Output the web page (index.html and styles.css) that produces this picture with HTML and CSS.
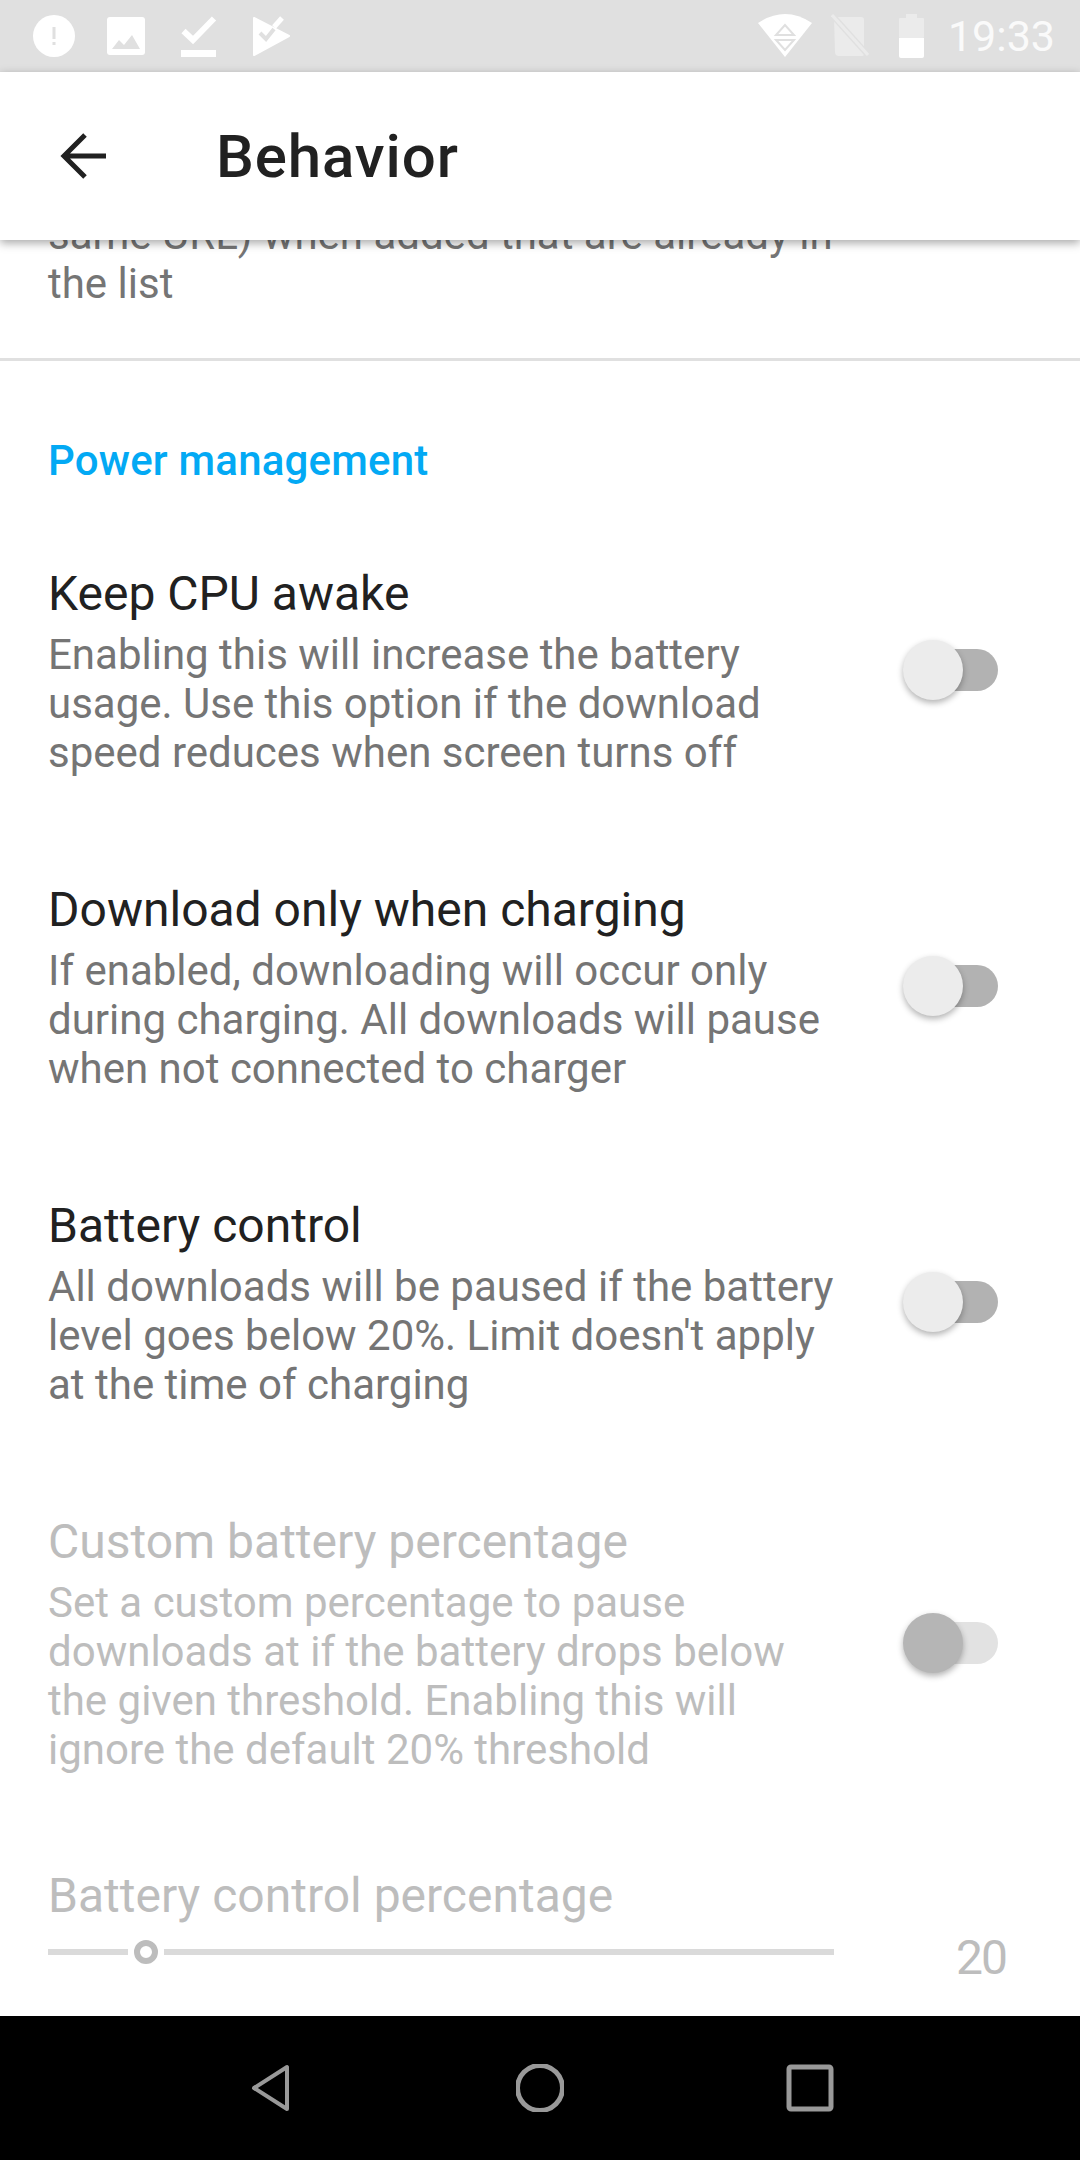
FILE: index.html
```html
<!DOCTYPE html>
<html lang="en">
<head>
    <meta charset="UTF-8">
    <meta name="viewport" content="width=device-width, initial-scale=1.0">
    <title>Behavior</title>
    <link rel="stylesheet" href="styles.css">
</head>
<body>

<div class="phone">

    <!-- Status bar -->
    <div class="statusbar">
        <div class="status-left">
            <svg class="nicon" viewBox="0 0 42 42">
                <circle cx="21" cy="21" r="21" fill="#fff"/>
                <rect x="19.500" y="12" width="3" height="12" fill="#e0e0e0"/>
                <rect x="19.500" y="27" width="3" height="3" fill="#e0e0e0"/>
            </svg>
            <svg class="nicon" viewBox="0 0 42 42">
                <rect x="2" y="2" width="38" height="38" rx="3" fill="#fff"/>
                <path d="M7 34 L14 25 L19 30 L27 20 L35 34 Z" fill="#e0e0e0"/>
            </svg>
            <svg class="nicon" viewBox="0 0 42 42">
                <path d="M6.500 16 L16 25 L37 3.500" fill="none" stroke="#fff" stroke-width="6"/>
                <rect x="4" y="35" width="35" height="7" fill="#fff"/>
            </svg>
            <svg class="nicon" viewBox="0 0 42 42">
                <path d="M5 3 L40 21 L5 40 Z" fill="#fff" stroke="#fff" stroke-width="2" stroke-linejoin="round"/>
                <path d="M11 18 L17 24 L25 14" fill="none" stroke="#e0e0e0" stroke-width="4"/>
                <path d="M25 12 L33 3" fill="none" stroke="#fff" stroke-width="5"/>
            </svg>
        </div>
        <div class="status-right">
            <svg class="wifi" viewBox="0 0 54 44">
                <path d="M0 9 Q27 -9 54 9 L27 43 Z" fill="#fff"/>
                <path d="M27 11 L18 21 H36 Z M18 26 H36 L27 36 Z" fill="none" stroke="#e0e0e0" stroke-width="2"/>
            </svg>
            <svg class="sim" viewBox="0 0 38 44">
                <path d="M3 3 H30 Q33 3 33 6 V40 Q33 42 30 42 H8 Q4 42 4 38 Z" fill="#ebebeb"/>
                <path d="M1 1 L37 41" stroke="#e0e0e0" stroke-width="6"/>
                <path d="M1 1 L37 41" stroke="#ebebeb" stroke-width="3"/>
            </svg>
            <svg class="battery" viewBox="0 0 25 44">
                <rect x="7" y="0" width="11" height="6" fill="#ebebeb"/>
                <rect x="0" y="4" width="25" height="20" rx="1" fill="#ebebeb"/>
                <path d="M0 24 H25 V42 Q25 44 23 44 H2 Q0 44 0 42 Z" fill="#fff"/>
            </svg>
            <span class="clock">19:33</span>
        </div>
    </div>

    <!-- App bar -->
    <div class="appbar">
        <svg class="back" viewBox="0 0 48 48">
            <path d="M46 24 H4 M25 3 L4 24 L25 45" fill="none" stroke="#212121" stroke-width="5"/>
        </svg>
        <h1>Behavior</h1>
    </div>

    <!-- Settings list -->
    <div class="content">
        <p class="summary cut-off">same URL) when added that are already in<br>the list</p>
        <div class="divider"></div>
        <h2 class="section">Power management</h2>

        <div class="pref">
            <div class="pref-text">
                <div class="title">Keep CPU awake</div>
                <div class="summary">Enabling this will increase the battery usage. Use this option if the download speed reduces when screen turns off</div>
            </div>
            <div class="toggle"><span class="track"></span><span class="thumb"></span></div>
        </div>

        <div class="pref">
            <div class="pref-text">
                <div class="title">Download only when charging</div>
                <div class="summary">If enabled, downloading will occur only during charging. All downloads will pause when not connected to charger</div>
            </div>
            <div class="toggle"><span class="track"></span><span class="thumb"></span></div>
        </div>

        <div class="pref">
            <div class="pref-text">
                <div class="title">Battery control</div>
                <div class="summary">All downloads will be paused if the battery level goes below 20%. Limit doesn't apply at the time of charging</div>
            </div>
            <div class="toggle"><span class="track"></span><span class="thumb"></span></div>
        </div>

        <div class="pref disabled">
            <div class="pref-text">
                <div class="title">Custom battery percentage</div>
                <div class="summary">Set a custom percentage to pause downloads at if the battery drops below the given threshold. Enabling this will ignore the default 20% threshold</div>
            </div>
            <div class="toggle"><span class="track"></span><span class="thumb"></span></div>
        </div>

        <div class="seek disabled">
            <div class="title">Battery control percentage</div>
            <div class="seek-row">
                <div class="slider">
                    <span class="bar bar-start"></span>
                    <span class="knob"></span>
                    <span class="bar bar-end"></span>
                </div>
                <span class="seek-value">20</span>
            </div>
        </div>
    </div>

    <!-- Navigation bar -->
    <div class="navbar">
        <svg class="navicon" viewBox="0 0 48 48">
            <path d="M41 3 V45 L8 24 Z" fill="none" stroke="#999" stroke-width="4" stroke-linejoin="round"/>
        </svg>
        <svg class="navicon" viewBox="0 0 48 48">
            <circle cx="24" cy="24" r="22.500" fill="none" stroke="#999" stroke-width="5"/>
        </svg>
        <svg class="navicon" viewBox="0 0 48 48">
            <rect x="3" y="3" width="42" height="42" rx="2" fill="none" stroke="#999" stroke-width="5"/>
        </svg>
    </div>

</div>

</body>
</html>
```

FILE: styles.css
```css
* {
    box-sizing: border-box;
}
html, body {
    margin: 0;
    padding: 0;
}
body {
    font-family: Roboto, "Liberation Sans", sans-serif;
    background-color: #fff;
}
.phone {
    width: 1080px;
    height: 2160px;
    display: flex;
    flex-direction: column;
    overflow: hidden;
}

/* status bar */
.statusbar {
    height: 72px;
    flex: none;
    background-color: #e0e0e0;
    display: flex;
    align-items: center;
    justify-content: space-between;
    padding: 0 25px 0 33px;
}
.status-left {
    display: flex;
    gap: 30px;
}
.status-right {
    display: flex;
    align-items: center;
}
.nicon {
    width: 42px;
    height: 42px;
    display: block;
}
.wifi {
    width: 54px;
    height: 44px;
}
.sim {
    width: 38px;
    height: 44px;
    margin-left: 19px;
}
.battery {
    width: 25px;
    height: 44px;
    margin-left: 30px;
}
.clock {
    font-size: 43px;
    color: #fafafa;
    margin-left: 24px;
}

/* app bar */
.appbar {
    height: 168px;
    flex: none;
    background-color: #fff;
    display: flex;
    align-items: center;
    padding-left: 60px;
    position: relative;
    z-index: 2;
    box-shadow: 0 3px 9px rgba(0, 0, 0, 0.35);
}
.back {
    width: 48px;
    height: 48px;
}
.appbar h1 {
    margin: 0 0 0 108px;
    font-size: 60px;
    font-weight: 500;
    letter-spacing: 0.9px;
    color: #212121;
}

/* list */
.content {
    flex: 1;
    overflow: hidden;
    background-color: #fff;
}
.cut-off {
    margin: -30px 0 0;
    padding-left: 48px;
}
.divider {
    height: 3px;
    margin-top: 50px;
    background-color: #e0e0e0;
}
.section {
    margin: 0;
    padding: 75px 0 28px 48px;
    font-size: 42px;
    line-height: 49px;
    font-weight: 500;
    letter-spacing: 0.2px;
    color: #03a9f4;
}
.pref {
    display: flex;
    align-items: center;
    padding: 53px 0 52px 48px;
}
.pref-text {
    width: 792px;
}
.title {
    font-size: 48px;
    line-height: 56px;
    margin-bottom: 8px;
    color: #212121;
}
.summary {
    font-size: 42px;
    line-height: 49px;
    color: #757575;
}
.disabled .title,
.disabled .summary {
    color: #bdbdbd;
}

/* switch */
.toggle {
    position: relative;
    width: 102px;
    height: 60px;
    margin: 0 0 3px 56px;
}
.track {
    position: absolute;
    left: 24px;
    right: 0;
    top: 9px;
    height: 42px;
    border-radius: 21px;
    background-color: #b2b2b2;
}
.thumb {
    position: absolute;
    left: 7px;
    top: 0;
    width: 60px;
    height: 60px;
    border-radius: 50%;
    background-color: #ececec;
    box-shadow: 0 3px 6px rgba(0, 0, 0, 0.3);
}
.disabled .track {
    background-color: #e2e2e2;
}
.disabled .thumb {
    background-color: #b5b5b5;
}

/* seek bar */
.seek {
    padding: 42px 74px 0 48px;
}
.seek .title {
    margin-bottom: 0;
}
.seek-row {
    display: flex;
    justify-content: space-between;
}
.slider {
    width: 786px;
    height: 24px;
    margin-top: 16px;
    display: flex;
    align-items: center;
}
.bar {
    height: 6px;
    background-color: #dadada;
}
.bar-start {
    width: 80px;
}
.bar-end {
    flex: 1;
}
.knob {
    width: 24px;
    height: 24px;
    margin: 0 6px;
    border: 6px solid #bdbdbd;
    border-radius: 50%;
}
.seek-value {
    font-size: 48px;
    line-height: 49px;
    letter-spacing: -2px;
    color: #bdbdbd;
    margin-top: 9px;
}

/* navigation bar */
.navbar {
    height: 144px;
    flex: none;
    background-color: #000;
    display: flex;
    align-items: center;
    justify-content: center;
    gap: 222px;
}
.navicon {
    width: 48px;
    height: 48px;
}
```
